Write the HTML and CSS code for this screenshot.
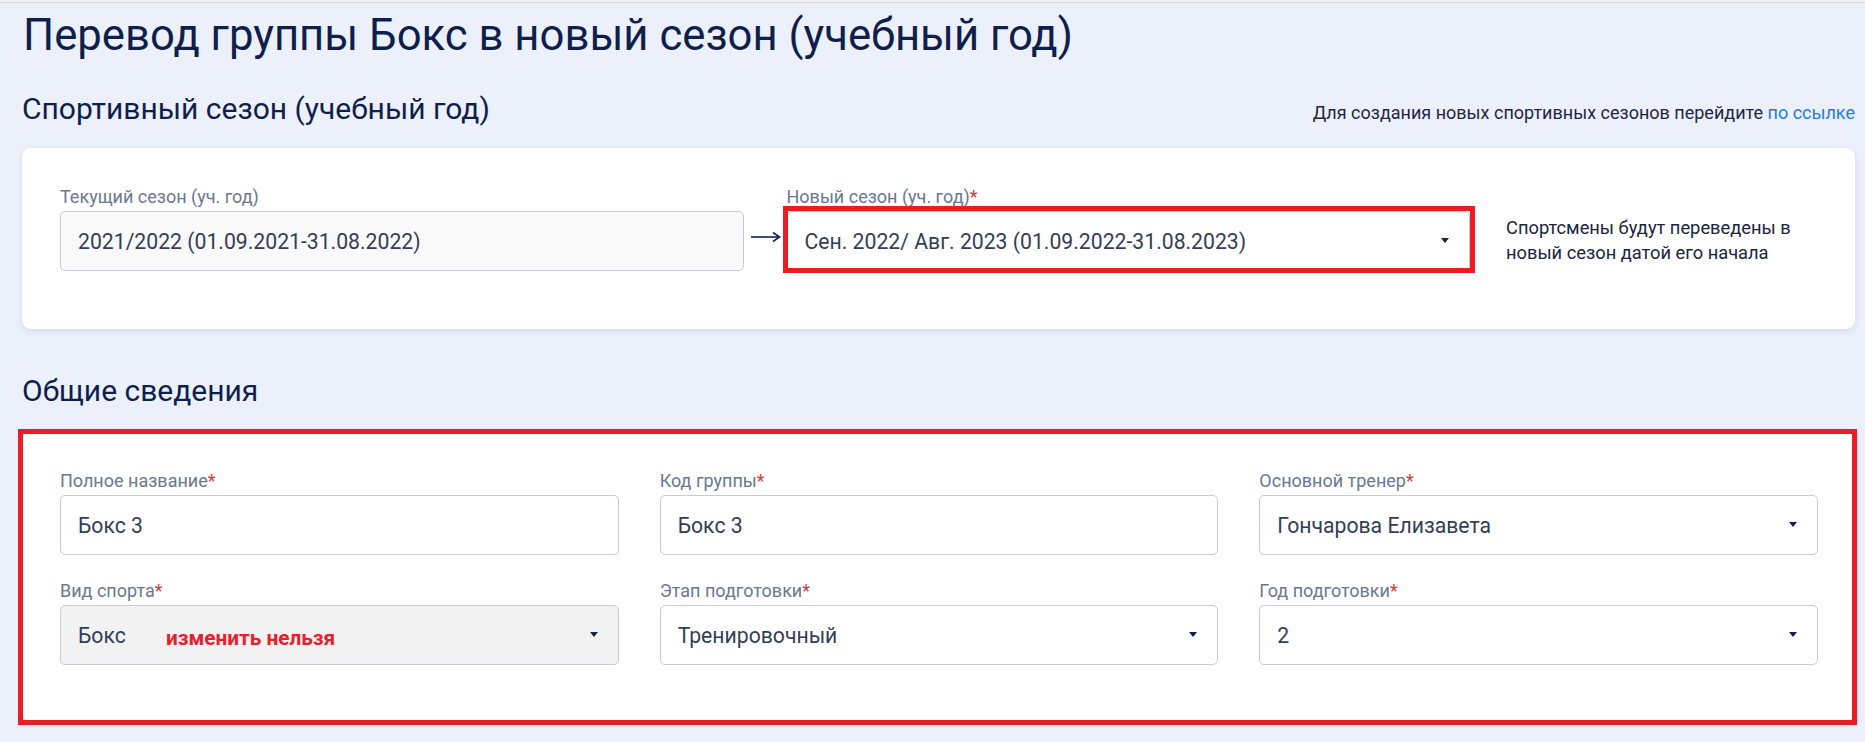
FILE: index.html
```html
<!DOCTYPE html>
<html lang="ru">
<head>
  <meta charset="UTF-8" />
  <title>Перевод группы в новый сезон</title>
  <link rel="stylesheet" href="styles.css">
</head>
<body>

  <div class="topbar"></div>

  <main class="page">
    <h1 class="page-title">Перевод группы Бокс в новый сезон (учебный год)</h1>

    <!-- Сезон -->
    <div class="section-head">
      <h2 class="section-title">Спортивный сезон (учебный год)</h2>
      <p class="note">Для создания новых спортивных сезонов перейдите <a href="#">по ссылке</a></p>
    </div>

    <div class="card season-card">
      <div class="field">
        <label class="field-label">Текущий сезон (уч. год)</label>
        <div class="control readonly">2021/2022 (01.09.2021-31.08.2022)</div>
      </div>

      <div class="arrow">
        <svg width="30" height="12" viewBox="0 0 30 12">
          <path d="M0 6H28" stroke="#14204a" stroke-width="1.6" fill="none"/>
          <path d="M22 1.5L28.6 6L22 10.5" stroke="#14204a" stroke-width="1.6" fill="none"/>
        </svg>
      </div>

      <div class="field">
        <label class="field-label">Новый сезон (уч. год)<span class="req">*</span></label>
        <div class="control select marked">Сен. 2022/ Авг. 2023 (01.09.2022-31.08.2023)</div>
      </div>

      <p class="hint">Спортсмены будут переведены в новый сезон датой его начала</p>
    </div>

    <!-- Общие сведения -->
    <h2 class="section-title info-title">Общие сведения</h2>

    <div class="card info-card marked-card">
      <div class="field">
        <label class="field-label">Полное название<span class="req">*</span></label>
        <div class="control">Бокс 3</div>
      </div>
      <div class="field">
        <label class="field-label">Код группы<span class="req">*</span></label>
        <div class="control">Бокс 3</div>
      </div>
      <div class="field">
        <label class="field-label">Основной тренер<span class="req">*</span></label>
        <div class="control select">Гончарова Елизавета</div>
      </div>

      <div class="field">
        <label class="field-label">Вид спорта<span class="req">*</span></label>
        <div class="control select disabled">
          Бокс
          <span class="locked-note">изменить нельзя</span>
        </div>
      </div>
      <div class="field">
        <label class="field-label">Этап подготовки<span class="req">*</span></label>
        <div class="control select">Тренировочный</div>
      </div>
      <div class="field">
        <label class="field-label">Год подготовки<span class="req">*</span></label>
        <div class="control select">2</div>
      </div>
    </div>
  </main>

</body>
</html>
```

FILE: styles.css
```css
* { margin: 0; padding: 0; box-sizing: border-box; }

html, body {
  height: 100%;
  background: #ecf0fb;
  color: #13214d;
  font-family: Roboto, "Liberation Sans", sans-serif;
  overflow: hidden;
}

.topbar {
  height: 3px;
  background: #f3f3f4;
  border-bottom: 1px solid #d4d6da;
}

.page {
  padding: 0 10px 0 22px;
}

.page-title {
  margin-top: 7px;
  font-size: 43.7px;
  line-height: 50px;
  font-weight: 400;
  color: #0f1f4d;
  padding-left: 1px;
}

.section-head {
  display: flex;
  justify-content: space-between;
  align-items: baseline;
  margin-top: 32px;
}

.section-title {
  font-size: 30px;
  line-height: 34px;
  font-weight: 400;
  color: #0f1f4d;
}

.note {
  font-size: 18px;
  color: #1d2640;
}
.note a {
  color: #1e7ee6;
  text-decoration: none;
}

/* карточки */
.card {
  background: #fff;
  border-radius: 9px;
  box-shadow: 0 2px 6px rgba(40, 60, 110, 0.13);
  padding: 38px 37px 58px 38px;
}

.season-card {
  margin-top: 22px;
  display: grid;
  grid-template-columns: 1fr 43px 1fr 348px;
  align-items: end;
}

.field-label {
  display: block;
  font-size: 18px;
  line-height: 21px;
  color: #6a7891;
  margin-bottom: 4px;
}
.req { color: #e53238; }

.control {
  position: relative;
  height: 60px;
  display: flex;
  align-items: center;
  padding: 0 40px 0 17px;
  border: 1px solid #c9cbd0;
  border-radius: 5px;
  background: #fff;
  font-size: 21.2px;
  color: #333d57;
  white-space: nowrap;
}
.control.readonly { background: #f9f9fa; }
.control.disabled { background: #f2f2f2; }

/* треугольник селекта */
.select::before {
  content: "";
  position: absolute;
  right: 20px;
  top: 50%;
  margin-top: -3px;
  border-left: 4.5px solid transparent;
  border-right: 4.5px solid transparent;
  border-top: 5px solid #14204a;
}

.arrow {
  height: 60px;
  display: flex;
  align-items: center;
  justify-content: center;
  padding-bottom: 8px;
  padding-left: 2px;
}

.hint {
  margin-left: 36px;
  height: 60px;
  display: flex;
  align-items: center;
  font-size: 18.3px;
  line-height: 25.3px;
  color: #1b2440;
  padding-bottom: 2px;
}

/* красные пометки */
.marked::after {
  content: "";
  position: absolute;
  top: -6px;
  left: -5px;
  right: -6px;
  bottom: -3px;
  border: 5px solid #ed1c24;
  pointer-events: none;
}

.info-title {
  margin-top: 45px;
}

.info-card {
  position: relative;
  margin-top: 22px;
  padding-top: 40px;
  padding-bottom: 56px;
  display: grid;
  grid-template-columns: repeat(3, 1fr);
  column-gap: 41px;
  row-gap: 25px;
}
.marked-card::after {
  content: "";
  position: absolute;
  top: -1px;
  left: -4px;
  right: -2px;
  bottom: -4px;
  border: 5px solid #ed1c24;
  pointer-events: none;
}

.locked-note {
  position: absolute;
  left: 105px;
  top: 20px;
  font-size: 20.8px;
  font-weight: 700;
  color: #e8202a;
}
```
